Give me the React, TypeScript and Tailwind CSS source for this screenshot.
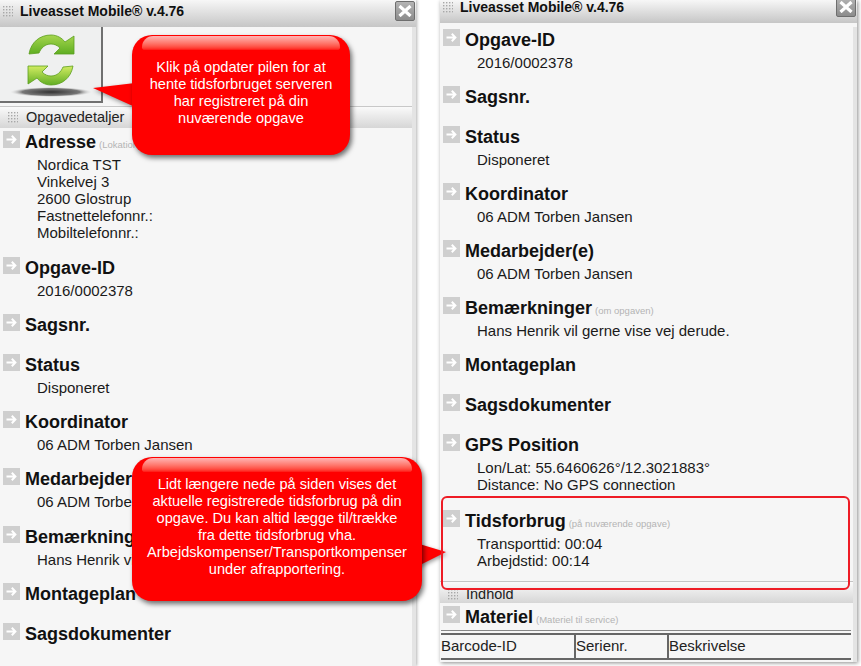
const Grip = () => (
  <svg width="10" height="12" viewBox="0 0 10 12" className="shrink-0">
    <defs>
      <pattern id="grip" width="3" height="3" patternUnits="userSpaceOnUse">
        <rect width="1.4" height="1.4" fill="#a8a8a8" />
      </pattern>
    </defs>
    <rect width="10" height="12" fill="url(#grip)" />
  </svg>
)

const ArrowBox = () => (
  <div className="w-[17px] h-[17px] bg-[#cfcfcf] flex items-center justify-center shrink-0 mt-[3px]">
    <svg width="11" height="11" viewBox="0 0 11 11" fill="none" stroke="#fff" strokeWidth="2">
      <path d="M0.5 5.5H9M5.8 1.8L9.4 5.5L5.8 9.2" />
    </svg>
  </div>
)

const CloseButton = () => (
  <div className="w-[20px] h-[20px] rounded-[2px] border border-[#6e6e6e] bg-gradient-to-b from-[#b4b4b4] to-[#8c8c8c] flex items-center justify-center">
    <svg width="14" height="12" viewBox="0 0 14 12" stroke="#fff" strokeWidth="3.2">
      <path d="M1.5 1L12.5 11M12.5 1L1.5 11" />
    </svg>
  </div>
)

const TitleBar = ({ offset }: { offset: boolean }) => (
  <div
    className={`flex justify-between bg-gradient-to-b from-[#f7f7f7] to-[#c6c6c6] pl-[3px] pr-[1px] ${
      offset ? 'h-[23px] items-start' : 'h-[27px] pt-[1px]'
    }`}
  >
    <div className={`flex items-center gap-[7px] ${offset ? 'h-[15px]' : 'h-[21px]'}`}>
      <Grip />
      <span className="text-[14px] font-bold text-[#111]">Liveasset Mobile® v.4.76</span>
    </div>
    <div className={offset ? '-mt-[3px]' : ''}>
      <CloseButton />
    </div>
  </div>
)

const SectionBar = ({ label, className }: { label: string; className: string }) => (
  <div className={`flex items-center gap-[8px] pl-[8px] bg-gradient-to-b from-[#fafafa] to-[#d6d6d6] ${className}`}>
    <Grip />
    <span className="text-[14.5px] text-[#222]">{label}</span>
  </div>
)

type SectionProps = { title: string; hint?: string; lines?: string[]; className?: string }

const Section = ({ title, hint, lines = [], className = '' }: SectionProps) => (
  <div className={`pl-[3px] pb-[12px] ${className}`}>
    <div className="flex gap-[5px] h-[28px]">
      <ArrowBox />
      <div className="flex items-baseline gap-[3px] whitespace-nowrap leading-[28px]">
        <span className="text-[18px] font-bold text-[#111]">{title}</span>
        {hint && <span className="text-[9.5px] text-[#b4b4b4]">{hint}</span>}
      </div>
    </div>
    {lines.map((line) => (
      <div key={line} className="pl-[34px] text-[15px] leading-[17px] text-[#1a1a1a] whitespace-nowrap">
        {line}
      </div>
    ))}
  </div>
)

const RefreshIcon = () => (
  <svg width="84" height="64" viewBox="0 0 84 64">
    <defs>
      <linearGradient id="top" x1="0" y1="0" x2="0" y2="1">
        <stop offset="0" stopColor="#a6d64e" />
        <stop offset="1" stopColor="#5fae22" />
      </linearGradient>
      <linearGradient id="bottom" x1="0" y1="1" x2="0" y2="0">
        <stop offset="0" stopColor="#62ae24" />
        <stop offset="1" stopColor="#d2ec62" />
      </linearGradient>
      <radialGradient id="shade">
        <stop offset="0" stopColor="#333" />
        <stop offset="0.7" stopColor="#777" />
        <stop offset="1" stopColor="#ddd" stopOpacity="0" />
      </radialGradient>
    </defs>
    <ellipse cx="42" cy="58" rx="41" ry="5" fill="url(#shade)" />
    <g transform="translate(19 1)">
      <path
        d="M1 19C3 7 12 0 23 0C29 0 34 3 37 7L46 1V19H26L32 13C29 10 26 9 23 9C17 9 13 13 11 18Z"
        fill="url(#top)"
        stroke="#5c9e1e"
        strokeWidth="0.8"
      />
      <path
        d="M45 31C43 43 34 50 23 50C17 50 12 47 9 43L0 49V31H20L14 37C17 40 20 41 23 41C29 41 33 37 35 32Z"
        fill="url(#bottom)"
        stroke="#5c9e1e"
        strokeWidth="0.8"
      />
    </g>
  </svg>
)

const ScrollTrack = () => (
  <div className="absolute right-0 top-[27px] bottom-0 w-[4px] bg-[#e4e4e4]" />
)

const Callout = ({ className, lines }: { className: string; lines: string[] }) => (
  <div
    className={`absolute bg-[#ff0000] rounded-[20px] shadow-[2px_3px_5px_rgba(0,0,0,0.55)] flex flex-col items-center text-white text-[14.6px] leading-[17px] text-center ${className}`}
  >
    <div className="absolute left-[10px] right-[10px] top-[1px] h-[14px] rounded-t-[12px] rounded-b-[3px] bg-gradient-to-b from-[#ffb4b4] to-[#ff1010]" />
    {lines.map((line) => (
      <div key={line} className="whitespace-nowrap">
        {line}
      </div>
    ))}
  </div>
)

export default function App() {
  return (
    <div className="relative w-[861px] h-[666px] overflow-hidden bg-white flex font-['Liberation_Sans',Arial,sans-serif]">
      <div className="relative w-[416px] h-[666px] shrink-0 bg-[#f6f6f6] shadow-[1px_0_3px_rgba(0,0,0,0.3)]">
        <TitleBar offset={false} />
        <ScrollTrack />
        <div className="h-[76px] w-[103px] bg-[#eff0f0] border-r-[2px] border-b-[2px] border-[#707070] flex items-start justify-center pt-[7px]">
          <RefreshIcon />
        </div>
        <div className="h-[4px] border-b border-[#c8c8c8]" />
        <SectionBar label="Opgavedetaljer" className="h-[21px] w-[412px]" />
        <Section
          title="Adresse"
          hint="(Lokation)"
          className="mb-[1px]"
          lines={['Nordica TST', 'Vinkelvej 3', '2600 Glostrup', 'Fastnettelefonnr.:', 'Mobiltelefonnr.:']}
        />
        <Section title="Opgave-ID" lines={['2016/0002378']} />
        <Section title="Sagsnr." />
        <Section title="Status" lines={['Disponeret']} />
        <Section title="Koordinator" lines={['06 ADM Torben Jansen']} />
        <Section title="Medarbejder(e)" className="mb-[1px]" lines={['06 ADM Torben Jansen']} />
        <Section title="Bemærkninger" lines={['Hans Henrik vil gerne vise vej derude.']} />
        <Section title="Montageplan" />
        <Section title="Sagsdokumenter" />
      </div>

      <div className="relative ml-[24px] w-[417px] h-[662px] shrink-0 bg-[#f6f6f6] shadow-[1px_1px_4px_rgba(0,0,0,0.45)]">
        <TitleBar offset />
        <ScrollTrack />
        <div className="pt-[3px]">
          <Section title="Opgave-ID" lines={['2016/0002378']} />
          <Section title="Sagsnr." />
          <Section title="Status" lines={['Disponeret']} />
          <Section title="Koordinator" lines={['06 ADM Torben Jansen']} />
          <Section title="Medarbejder(e)" lines={['06 ADM Torben Jansen']} />
          <Section
            title="Bemærkninger"
            hint="(om opgaven)"
            lines={['Hans Henrik vil gerne vise vej derude.']}
          />
          <Section title="Montageplan" />
          <Section title="Sagsdokumenter" />
          <Section
            title="GPS Position"
            className="mb-[2px]"
            lines={['Lon/Lat: 55.6460626°/12.3021883°', 'Distance: No GPS connection']}
          />
          <Section title="Tidsforbrug" hint="(på nuværende opgave)" lines={['Transporttid: 00:04', 'Arbejdstid: 00:14']} />
          <div className="border-t border-[#c4c4c4]" />
          <SectionBar label="Indhold" className="h-[21px] w-[413px] pt-[4px]" />
          <Section title="Materiel" hint="(Materiel til service)" />
        </div>
        <div className="-mt-[13px] ml-[1px] w-[410px] border-t border-[#888] pt-[2px]">
          <table className="w-full table-fixed border-collapse text-[15px] text-[#222]">
            <tbody>
              <tr className="h-[22px]">
                <td className="w-[134px] border-y-[2px] border-r-[2px] border-[#666]">Barcode-ID</td>
                <td className="w-[93px] border-y-[2px] border-r-[2px] border-[#666]">Serienr.</td>
                <td className="border-y-[2px] border-[#666]">Beskrivelse</td>
              </tr>
            </tbody>
          </table>
        </div>
      </div>

      {/* callouts and highlight lie over the panels */}
      <svg
        className="absolute left-[88px] top-[80px] drop-shadow-[1px_2px_2px_rgba(0,0,0,0.4)]"
        width="50"
        height="30"
        viewBox="0 0 50 30"
      >
        <polygon points="5,8 47,3 47,27" fill="#ff0000" />
      </svg>
      <Callout
        className="left-[132px] top-[35px] w-[218px] h-[120px] pt-[24px]"
        lines={[
          'Klik på opdater pilen for at',
          'hente tidsforbruget serveren',
          'har registreret på din',
          'nuværende opgave',
        ]}
      />
      <svg
        className="absolute left-[416px] top-[538px] drop-shadow-[1px_2px_2px_rgba(0,0,0,0.4)]"
        width="32"
        height="32"
        viewBox="0 0 32 32"
      >
        <polygon points="0,5 30,14 0,29" fill="#ff0000" />
      </svg>
      <Callout
        className="left-[132px] top-[457px] w-[290px] h-[144px] pt-[19px]"
        lines={[
          'Lidt længere nede på siden vises det',
          'aktuelle registrerede tidsforbrug på din',
          'opgave. Du kan altid lægge til/trække',
          'fra dette tidsforbrug vha.',
          'Arbejdskompenser/Transportkompenser',
          'under afrapportering.',
        ]}
      />
      <div className="absolute left-[441px] top-[496px] w-[409px] h-[94px] border-2 border-[#ee1c25] rounded-[6px]" />
    </div>
  )
}
